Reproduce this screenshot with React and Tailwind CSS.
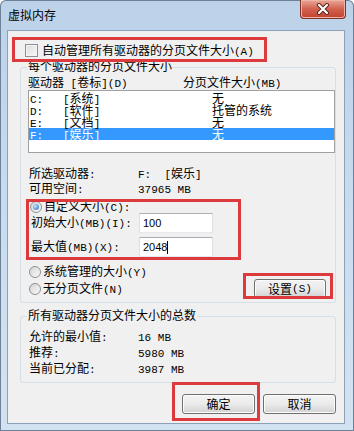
const mono = "font-['Liberation_Mono',monospace] text-[11px] whitespace-pre";

function T({ s }) {
  return s
    .split(/([\x20-\x7e]+)/)
    .filter(Boolean)
    .map((p, i) =>
      /^[\x20-\x7e]+$/.test(p) ? (
        <span key={i} className={mono}>
          {p}
        </span>
      ) : (
        <span key={i}>{p}</span>
      )
    );
}

const Radio = ({ on }) => (
  <span className="w-[12px] h-[12px] rounded-full border border-[#8e8f8f] bg-linear-to-br from-[#d4d4d4] to-[#fbfbfb] flex items-center justify-center shrink-0">
    {on && (
      <span className="w-[6px] h-[6px] rounded-full bg-[radial-gradient(circle_at_35%_35%,#c6e4fc,#1e68bd)]" />
    )}
  </span>
);

const Btn = ({ label, w = "w-[73px]", h = "h-[20px]" }) => (
  <button
    className={`${w} ${h} rounded-[3px] border border-[#707070] bg-linear-to-b from-[#f3f3f3] via-[#ebebeb] to-[#d2d2d2] shadow-[inset_0_0_0_1px_#fcfcfc] flex items-center justify-center text-[12px] leading-[12px] text-black`}
  >
    <T s={label} />
  </button>
);

const Input = ({ value, caret }) => (
  <div className="w-[74px] h-[20px] bg-white border border-[#dbdfe6] border-t-[#abadb3] border-b-[#e3e9ef] flex items-center pl-[3px] font-['Liberation_Sans',sans-serif] text-[11px] text-black">
    {value}
    {caret && <span className="w-[1px] h-[13px] bg-black" />}
  </div>
);

const drives = [
  ["C:", "[系统]", "无"],
  ["D:", "[软件]", "托管的系统"],
  ["E:", "[文档]", "无"],
  ["F:", "[娱乐]", "无"],
];

const Info = ({ k, v }) => (
  <div className="flex h-[12px] leading-[12px] pl-[8px]">
    <div className="w-[109px]">
      <T s={k} />
    </div>
    <div>
      <T s={v} />
    </div>
  </div>
);

const Mark = ({ cls }) => (
  <div className={`absolute border-[3px] border-[#dd3a3e] pointer-events-none ${cls}`} />
);

export default function App() {
  return (
    <div className="w-[354px] h-[431px] bg-linear-to-b from-[#bcd2e9] via-[#c9dcef] to-[#d3e2f1] shadow-[inset_0_0_0_1px_#6d8299] rounded-t-[6px] font-['Noto_Sans_CJK_SC','Liberation_Sans',sans-serif] text-[12px] text-black overflow-hidden">
      <div className="h-[30px] flex justify-between items-start">
        <div className="pl-[8px] pt-[9px] leading-[12px]">虚拟内存</div>
        <div className="mr-[8px] w-[46px] h-[19px] rounded-b-[4px] border border-t-0 border-[#7a3326] bg-linear-to-b from-[#e9a898] via-[#d2604f] to-[#c4402f] shadow-[inset_0_0_0_1px_#f0b4a6] flex items-center justify-center">
          <svg width="14" height="12" viewBox="0 0 14 12">
            <path d="M3 2 L11 10 M11 2 L3 10" stroke="#5b231a" strokeWidth="4" strokeLinecap="round" />
            <path d="M3 2 L11 10 M11 2 L3 10" stroke="#ffffff" strokeWidth="2.2" strokeLinecap="round" />
          </svg>
        </div>
      </div>

      <div className="relative ml-[7px] w-[338px] h-[394px] bg-[#f0f0f0] border border-[#8da1b6]">
        <div className="mt-[13px] ml-[17px] h-[13px] flex items-center gap-[4px]">
          <span className="w-[13px] h-[13px] border border-[#8f8f8f] bg-linear-to-br from-[#dcdcdc] to-[#f8f8f8] shadow-[inset_0_0_0_1px_#f4f4f4]" />
          <span className="leading-[12px]">
            <T s="自动管理所有驱动器的分页文件大小(A)" />
          </span>
        </div>

        <div className="mt-[10px] ml-[12px] w-[316px] h-[236px] border border-[#d5dfe5] rounded-[3px]">
          <div className="-mt-[8px] ml-[6px] px-[1px] h-[12px] leading-[12px] w-fit bg-[#f0f0f0]">
            每个驱动器的分页文件大小
          </div>
          <div className="mt-[4px] pl-[7px] flex h-[12px] leading-[12px]">
            <div className="w-[155px]">
              <T s="驱动器 [卷标](D)" />
            </div>
            <div>
              <T s="分页文件大小(MB)" />
            </div>
          </div>
          <div className="mt-[2px] ml-[7px] w-[307px] h-[63px] border border-[#a0a0a0] bg-white pt-[1px]">
            {drives.map(([d, l, s], i) => (
              <div
                key={d}
                className={`flex h-[12px] leading-[12px] ${i === 3 ? "bg-[#3399ff] text-white" : ""}`}
              >
                <div className="w-[34px] pl-[1px]">
                  <span className={mono}>{d}</span>
                </div>
                <div className="w-[149px]">
                  <T s={l} />
                </div>
                <div>{s}</div>
              </div>
            ))}
          </div>

          <div className="mt-[14px]">
            <Info k="所选驱动器:" v="F:  [娱乐]" />
          </div>
          <div className="mt-[3px]">
            <Info k="可用空间:" v="37965 MB" />
          </div>

          <div className="mt-[7px] pl-[9px] h-[12px] flex items-center gap-[2px] leading-[12px]">
            <Radio on />
            <span>
              <T s="自定义大小(C):" />
            </span>
          </div>
          <div className="pl-[10px] h-[20px] flex items-center">
            <div className="w-[108px] leading-[12px]">
              <T s="初始大小(MB)(I):" />
            </div>
            <Input value="100" />
          </div>
          <div className="mt-[4px] pl-[10px] h-[20px] flex items-center">
            <div className="w-[108px] leading-[12px]">
              <T s="最大值(MB)(X):" />
            </div>
            <Input value="2048" caret />
          </div>

          <div className="flex justify-between items-start">
            <div className="mt-[9px] pl-[8px]">
              <div className="h-[12px] flex items-center gap-[2px] leading-[12px]">
                <Radio />
                <span>
                  <T s="系统管理的大小(Y)" />
                </span>
              </div>
              <div className="mt-[5px] h-[12px] flex items-center gap-[2px] leading-[12px]">
                <Radio />
                <span>
                  <T s="无分页文件(N)" />
                </span>
              </div>
            </div>
            <div className="mt-[22px] mr-[9px]">
              <Btn label="设置(S)" w="w-[72px]" h="h-[19px]" />
            </div>
          </div>
        </div>

        <div className="mt-[13px] ml-[12px] w-[316px] h-[67px] border border-[#d5dfe5] rounded-[3px]">
          <div className="-mt-[8px] ml-[6px] px-[1px] h-[12px] leading-[12px] w-fit bg-[#f0f0f0]">
            所有驱动器分页文件大小的总数
          </div>
          <div className="mt-[9px]">
            <Info k="允许的最小值:" v="16 MB" />
          </div>
          <div className="mt-[4px]">
            <Info k="推荐:" v="5980 MB" />
          </div>
          <div className="mt-[4px]">
            <Info k="当前已分配:" v="3987 MB" />
          </div>
        </div>

        <div className="mt-[11px] pr-[8px] flex justify-end gap-[8px]">
          <Btn label="确定" />
          <Btn label="取消" />
        </div>

        <Mark cls="left-[4px] top-[6px] w-[255px] h-[25px]" />
        <Mark cls="left-[18px] top-[168px] w-[215px] h-[61px]" />
        <Mark cls="left-[235px] top-[242px] w-[90px] h-[26px]" />
        <Mark cls="left-[164px] top-[351px] w-[88px] h-[39px]" />
      </div>
    </div>
  );
}
